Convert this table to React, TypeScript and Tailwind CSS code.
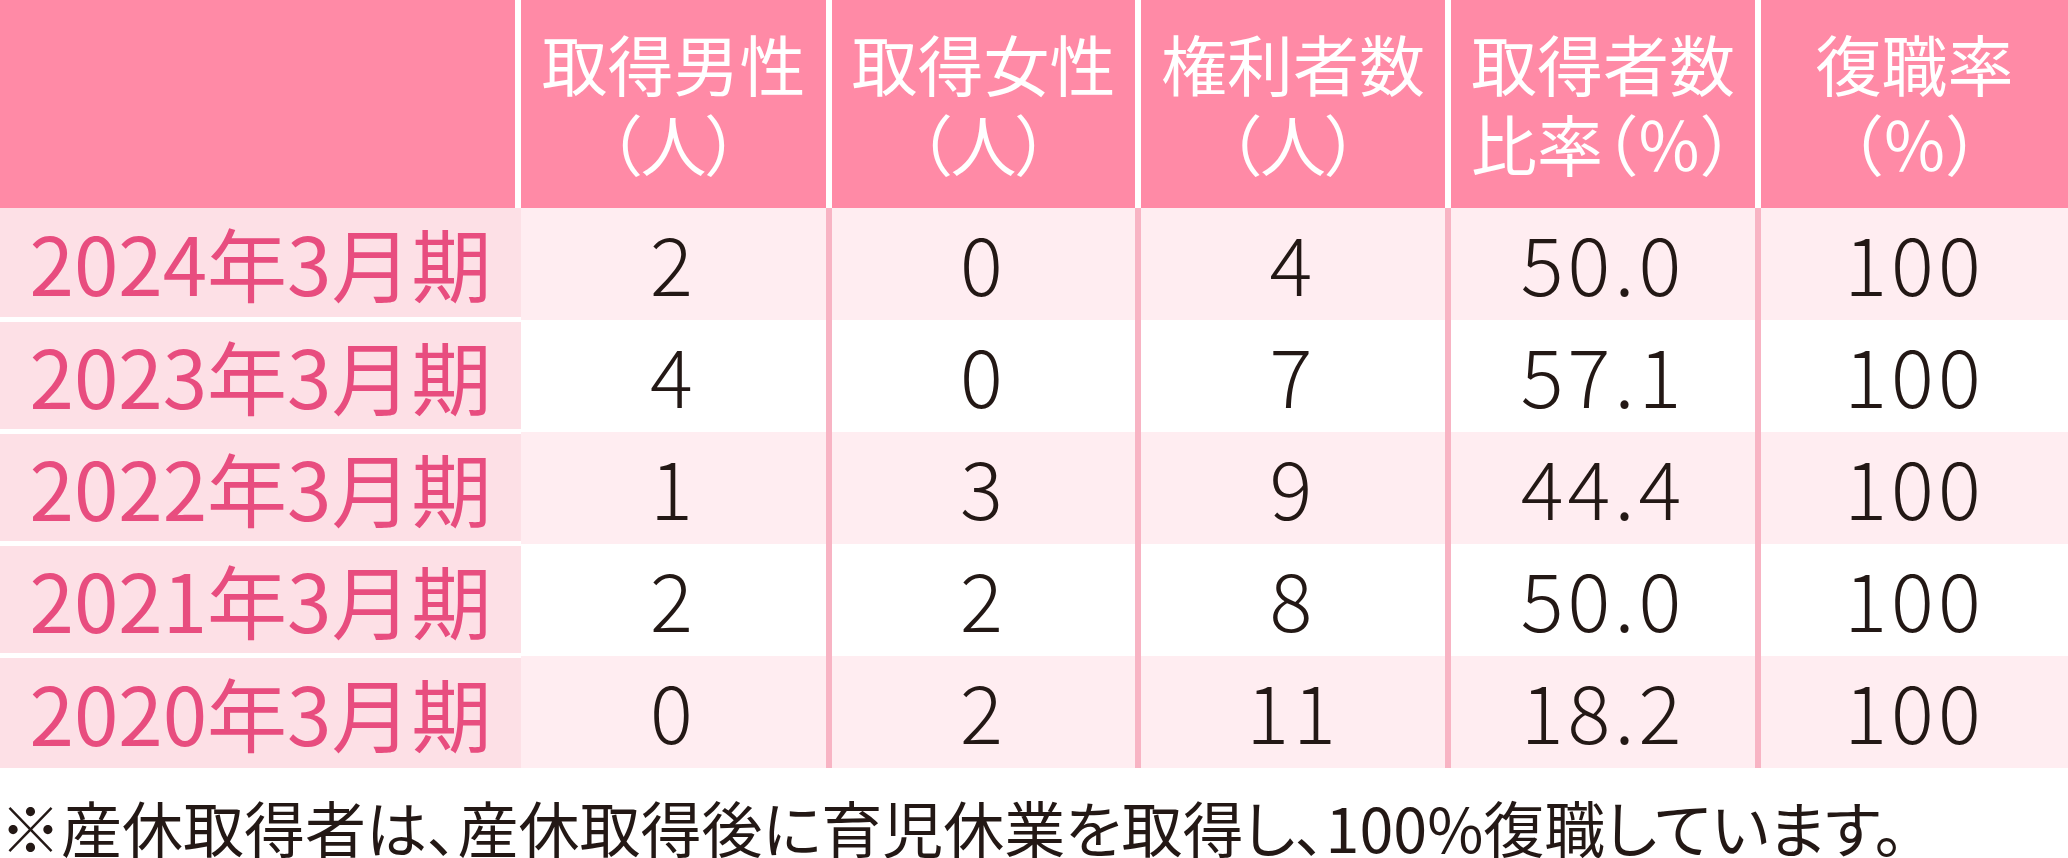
const headers: string[][] = [
  ["取得男性", "（人）"],
  ["取得女性", "（人）"],
  ["権利者数", "（人）"],
  ["取得者数", "比率（％）"],
  ["復職率", "（％）"],
];

const rows: string[][] = [
  ["2024年3月期", "2", "0", "4", "50.0", "100"],
  ["2023年3月期", "4", "0", "7", "57.1", "100"],
  ["2022年3月期", "1", "3", "9", "44.4", "100"],
  ["2021年3月期", "2", "2", "8", "50.0", "100"],
  ["2020年3月期", "0", "2", "11", "18.2", "100"],
];

export default function App() {
  return (
    <div className="h-[858px] w-[2068px] overflow-hidden bg-white font-['Noto_Sans_CJK_JP','Noto_Sans',sans-serif]">
      <div className="grid h-[208px] grid-cols-[515px_305px_303px_304px_304px_1fr] gap-x-[6px] bg-white">
        <div className="bg-[#ff8aa6]" />
        {headers.map((lines) => (
          <div
            key={lines[0]}
            className="flex flex-col items-center justify-center bg-[#ff8aa6] pb-[4px] text-[66px] leading-[80px] text-white [font-feature-settings:'palt']"
          >
            {lines.map((line) => (
              <span key={line}>{line}</span>
            ))}
          </div>
        ))}
      </div>

      {rows.map((row, i) => (
        <div key={row[0]} className="grid h-[112px] grid-cols-[521px_305px_309px_310px_310px_1fr]">
          <div
            className={`flex items-center justify-center border-white bg-[#fde0e6] pb-[4px] text-[80px] leading-none font-normal text-[#e84d7f] ${
              i > 0 ? "border-t-2" : ""
            } ${i < rows.length - 1 ? "border-b-[3px]" : ""}`}
          >
            {row[0]}
          </div>
          {row.slice(1).map((value, j) => (
            <div
              key={j}
              className={`flex items-center justify-center pb-[6px] text-[80px] leading-none font-light tracking-[4px] text-[#231815] ${
                i % 2 === 0 ? "bg-[#ffedf1]" : "bg-white"
              } ${j > 0 ? "border-l-[6px] border-[#f8b4c4]" : ""}`}
            >
              {value}
            </div>
          ))}
        </div>
      ))}

      <p className="mt-[28px] whitespace-nowrap text-[61px] leading-none text-[#231815] [font-feature-settings:'palt']">
        ※産休取得者は、産休取得後に育児休業を取得し、100%復職しています。
      </p>
    </div>
  );
}
